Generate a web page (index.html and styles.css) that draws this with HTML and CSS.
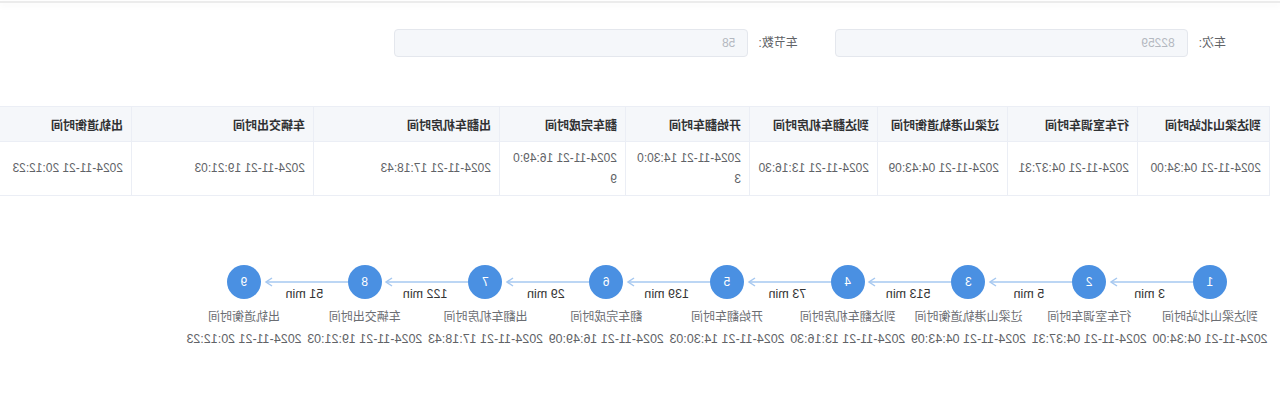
FILE: index.html
```html
<!DOCTYPE html>
<html lang="zh-CN">
<head>
<meta charset="utf-8">
<title>车次详情</title>
<link rel="stylesheet" href="styles.css">
</head>
<body>
<div class="page">
  <div class="topbar"></div>
  <div class="form">
    <div class="field field-train"><label class="label">车次:</label><div class="input">82259</div></div>
    <div class="field field-cars"><label class="label">车节数:</label><div class="input">58</div></div>
  </div>
  <table class="grid">
    <colgroup>
      <col class="w132"><col class="w130"><col class="w130"><col class="w128"><col class="w124"><col class="w126"><col class="w186"><col class="w182"><col class="w150">
    </colgroup>
    <thead>
      <tr>
        <th>到达梁山北站时间</th><th>行车室调车时间</th><th>过梁山港轨道衡时间</th><th>到达翻车机房时间</th><th>开始翻车时间</th><th>翻车完成时间</th><th>出翻车机房时间</th><th>车辆交出时间</th><th>出轨道衡时间</th>
      </tr>
    </thead>
    <tbody>
      <tr>
        <td>2024-11-21 04:34:00</td><td>2024-11-21 04:37:31</td><td>2024-11-21 04:43:09</td><td>2024-11-21 13:16:30</td><td class="wrap">2024-11-21 14:30:0<br>3</td><td class="wrap">2024-11-21 16:49:0<br>9</td><td>2024-11-21 17:18:43</td><td>2024-11-21 19:21:03</td><td>2024-11-21 20:12:23</td>
      </tr>
    </tbody>
  </table>
  <div class="flow">
    <div class="track">
      <div class="dot">1</div>
      <div class="edge"><svg width="86.75" height="22"><line x1="0" y1="17" x2="82" y2="17"/><polyline points="76,13 82,17 76,21"/></svg><span class="dur">3 min</span></div>
      <div class="dot">2</div>
      <div class="edge"><svg width="86.75" height="22"><line x1="0" y1="17" x2="82" y2="17"/><polyline points="76,13 82,17 76,21"/></svg><span class="dur">5 min</span></div>
      <div class="dot">3</div>
      <div class="edge"><svg width="86.75" height="22"><line x1="0" y1="17" x2="82" y2="17"/><polyline points="76,13 82,17 76,21"/></svg><span class="dur">513 min</span></div>
      <div class="dot">4</div>
      <div class="edge"><svg width="86.75" height="22"><line x1="0" y1="17" x2="82" y2="17"/><polyline points="76,13 82,17 76,21"/></svg><span class="dur">73 min</span></div>
      <div class="dot">5</div>
      <div class="edge"><svg width="86.75" height="22"><line x1="0" y1="17" x2="82" y2="17"/><polyline points="76,13 82,17 76,21"/></svg><span class="dur">139 min</span></div>
      <div class="dot">6</div>
      <div class="edge"><svg width="86.75" height="22"><line x1="0" y1="17" x2="82" y2="17"/><polyline points="76,13 82,17 76,21"/></svg><span class="dur">29 min</span></div>
      <div class="dot">7</div>
      <div class="edge"><svg width="86.75" height="22"><line x1="0" y1="17" x2="82" y2="17"/><polyline points="76,13 82,17 76,21"/></svg><span class="dur">122 min</span></div>
      <div class="dot">8</div>
      <div class="edge"><svg width="86.75" height="22"><line x1="0" y1="17" x2="82" y2="17"/><polyline points="76,13 82,17 76,21"/></svg><span class="dur">51 min</span></div>
      <div class="dot">9</div>
    </div>
    <div class="labels">
      <div class="stop"><span class="name">到达梁山北站时间</span><span class="time">2024-11-21 04:34:00</span></div>
      <div class="stop"><span class="name">行车室调车时间</span><span class="time">2024-11-21 04:37:31</span></div>
      <div class="stop"><span class="name">过梁山港轨道衡时间</span><span class="time">2024-11-21 04:43:09</span></div>
      <div class="stop"><span class="name">到达翻车机房时间</span><span class="time">2024-11-21 13:16:30</span></div>
      <div class="stop"><span class="name">开始翻车时间</span><span class="time">2024-11-21 14:30:03</span></div>
      <div class="stop"><span class="name">翻车完成时间</span><span class="time">2024-11-21 16:49:09</span></div>
      <div class="stop"><span class="name">出翻车机房时间</span><span class="time">2024-11-21 17:18:43</span></div>
      <div class="stop"><span class="name">车辆交出时间</span><span class="time">2024-11-21 19:21:03</span></div>
      <div class="stop"><span class="name">出轨道衡时间</span><span class="time">2024-11-21 20:12:23</span></div>
    </div>
  </div>
</div>
</body>
</html>
```
FILE: styles.css
```css
html, body {
  margin: 0;
  padding: 0;
  background: #fff;
}

.page {
  width: 1280px;
  height: 398px;
  overflow: hidden;
  transform: scaleX(-1);
  font-family: "Liberation Sans", "Noto Sans CJK SC", sans-serif;
  background: #fff;
}

.topbar {
  height: 2px;
  background: #ebebeb;
  box-shadow: 0 2px 7px rgba(0, 0, 0, 0.07);
  margin-top: 1px;
}

.form {
  display: flex;
  align-items: center;
  margin-top: 26px;
  padding-left: 54px;
}

.field {
  display: flex;
  align-items: center;
}

.label {
  font-size: 12px;
  color: #606266;
  line-height: 28px;
  margin-right: 11px;
}

.field-cars {
  margin-left: 37px;
}

.field-cars .label {
  margin-right: 10px;
}

.input {
  box-sizing: border-box;
  height: 28px;
  border: 1px solid #e4e7ed;
  border-radius: 4px;
  background: #f5f7fa;
  color: #b4b8c0;
  font-size: 12px;
  line-height: 26px;
  padding: 0 12px;
}

.field-train .input { width: 353px; }
.field-cars .input { width: 354px; }

.grid {
  margin-top: 49px;
  margin-left: 10px;
  border-collapse: collapse;
  table-layout: fixed;
  width: 1288px;
  font-size: 12px;
}

.w132 { width: 132px; }
.w130 { width: 130px; }
.w128 { width: 128px; }
.w124 { width: 124px; }
.w126 { width: 126px; }
.w186 { width: 186px; }
.w182 { width: 182px; }
.w150 { width: 150px; }

.grid th,
.grid td {
  border: 1px solid #ebeef5;
  text-align: left;
  padding: 0 8px;
  white-space: nowrap;
  overflow: hidden;
}

.grid th {
  background: #f5f7fa;
  color: #303133;
  font-weight: bold;
  height: 34px;
}

.grid td {
  color: #606266;
  height: 53px;
  line-height: 21px;
}

.grid td.wrap {
  overflow: visible;
}

.flow {
  margin-top: 69px;
}

.track {
  display: flex;
  align-items: flex-start;
  padding-left: 53px;
}

.dot {
  flex: none;
  width: 34px;
  height: 34px;
  border-radius: 50%;
  background: #4a90e2;
  color: #fff;
  font-size: 12px;
  display: flex;
  align-items: center;
  justify-content: center;
}

.edge {
  flex: none;
  width: 86.75px;
  display: flex;
  flex-direction: column;
  align-items: center;
}

.edge svg {
  display: block;
}

.edge line,
.edge polyline {
  stroke: #a6c8f0;
  stroke-width: 1.5;
  fill: none;
}

.dur {
  font-size: 12.5px;
  line-height: 14px;
  color: #333;
  white-space: nowrap;
}

.labels {
  display: flex;
  margin-top: 8px;
  padding-left: 9.625px;
}

.stop {
  flex: none;
  width: 120.75px;
  display: flex;
  flex-direction: column;
  align-items: center;
  white-space: nowrap;
}

.name {
  font-size: 12px;
  line-height: 16px;
  color: #6b6d72;
}

.time {
  font-size: 12.5px;
  line-height: 16px;
  color: #606266;
  margin-top: 6px;
}
```
